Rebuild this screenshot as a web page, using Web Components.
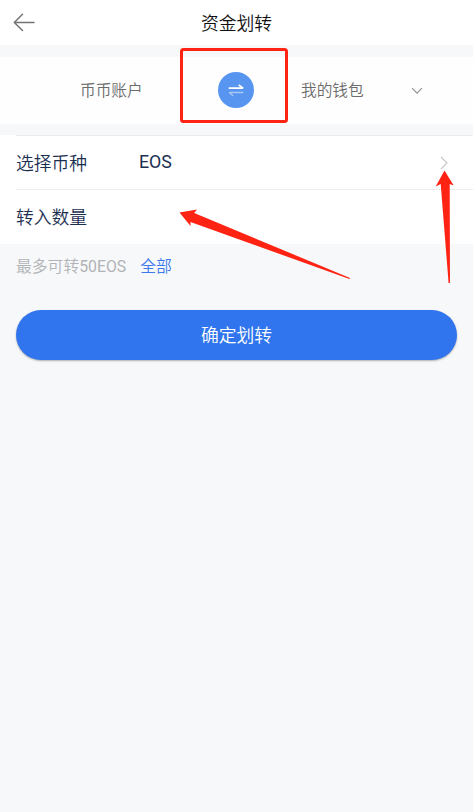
<!DOCTYPE html>
<html lang="zh-CN">
<head>
<meta charset="utf-8">
<title>资金划转</title>
<style>
html,body{margin:0;height:100%;background:#f7f8fa}
body{font-family:Roboto,"Noto Sans CJK SC",sans-serif;font-weight:350;overflow:hidden}
</style>
</head>
<body>
<transfer-page></transfer-page>
<script>
const define = (name, html) => customElements.define(name, class extends HTMLElement {
  constructor() {
    super();
    this.attachShadow({mode: 'open'}).innerHTML = html;
  }
});

define('page-header', `
<style>
:host{display:grid;grid-template-columns:60px 1fr 60px;align-items:center;height:45px;background:#fff;color:#111;font-size:17.8px;line-height:24px}
svg{display:block;margin:-1px 0 0 12px}
span{text-align:center;padding-top:3px}
</style>
<svg width="24" height="22" viewBox="0 0 24 22" fill="none" stroke="#737373" stroke-width="1.5" stroke-linecap="round" stroke-linejoin="round"><path d="M22 11.5H2.5M10.5 3.2L2.3 11.5l8.2 8"/></svg>
<span><slot></slot></span>`);

define('swap-button', `
<style>
:host{display:block;width:36px;height:36px;border-radius:50%;background:#5895f1}
svg{display:block}
</style>
<svg width="36" height="36" viewBox="0 0 36 36"><path d="M10.7 16.2H25L20.8 12.9" fill="none" stroke="#fff" stroke-width="1.8" stroke-linejoin="bevel"/><path d="M25.4 20.5H11.2L15.2 24" fill="none" stroke="#a6c7f8" stroke-width="1.3" stroke-linejoin="bevel"/></svg>`);

define('account-switch', `
<style>
:host{display:grid;grid-template-columns:218px 36px 1fr;align-items:center;height:67px;margin-top:12px;background:#fefefe;color:#6c6c6c;font-size:15.7px;line-height:22px}
.from{padding:1px 0 0 80px}
swap-button{margin-top:-1px}
.to{display:flex;align-items:center;justify-content:space-between;padding:1px 50px 0 47px}
svg{margin-top:-1px}
</style>
<div class="from"><slot name="from"></slot></div>
<swap-button></swap-button>
<div class="to"><slot name="to"></slot><svg width="12" height="8" viewBox="0 0 12 8" fill="none" stroke="#929292" stroke-width="1.1"><path d="M1 1.2L6 6.2L11 1.2"/></svg></div>`);

define('form-row', `
<style>
:host{display:block;background:#fff;padding-left:16px;color:#1d2f51;font-size:17.8px;line-height:24px}
.row{display:grid;grid-template-columns:123px 1fr auto;align-items:center;height:53px;border-top:1px solid #ebecee;padding-right:25px}
.label{padding-top:2px}
.value{padding-bottom:2px;font-size:17.8px;font-weight:400}
</style>
<div class="row"><span class="label"><slot></slot></span><span class="value"><slot name="value"></slot></span><slot name="icon"></slot></div>`);

define('amount-hint', `
<style>
:host{display:flex;gap:14px;padding:12px 16px 0;color:#b1b3b6;font-size:15.8px;line-height:22px}
.all{color:#3b79ed}
::slotted(b){font-weight:400}
</style>
<span><slot></slot></span><span class="all"><slot name="all"></slot></span>`);

define('primary-button', `
<style>
:host{display:block;margin:32px 16px 0}
button{display:flex;align-items:center;justify-content:center;width:100%;height:50px;padding:2px 0 0;border:0;border-radius:25px;background:#3075ee;color:#fff;font:350 17.8px/24px Roboto,"Noto Sans CJK SC",sans-serif;box-shadow:0 1px 2px rgba(0,0,0,.3)}
</style>
<button><slot></slot></button>`);

define('red-marks', `
<style>
:host{position:absolute;left:0;top:0;width:473px;height:812px;pointer-events:none}
svg{display:block}
</style>
<svg width="473" height="812" viewBox="0 0 473 812" fill="#ff2314"><rect x="181.5" y="49.5" width="105" height="72" rx="2" fill="none" stroke="#ff2314" stroke-width="3"/><path d="M179.5 212.5L197 209.5L194.2 213L350 278L349.5 279L190.5 222L190.5 226Z"/><path d="M444.5 170.5L453.7 185.5L449.7 184L450 283H448.6L440.7 184L435.7 186.5Z"/></svg>`);

define('transfer-page', `
<style>
:host{display:block;position:relative;width:473px;height:812px;overflow:hidden;background:#f7f8fa}
.form{display:block;margin-top:11px;padding-bottom:1px;background:#fff}
</style>
<page-header>资金划转</page-header>
<account-switch><span slot="from">币币账户</span><span slot="to">我的钱包</span></account-switch>
<div class="form">
<form-row>选择币种<span slot="value">EOS</span><svg slot="icon" width="8" height="14" viewBox="0 0 8 14" fill="none" stroke="#c5c6c8" stroke-width="1.1"><path d="M1 1L7 7L1 13"/></svg></form-row>
<form-row>转入数量</form-row>
</div>
<amount-hint>最多可转<b>50EOS</b><span slot="all">全部</span></amount-hint>
<primary-button>确定划转</primary-button>
<red-marks></red-marks>`);
</script>
</body>
</html>
